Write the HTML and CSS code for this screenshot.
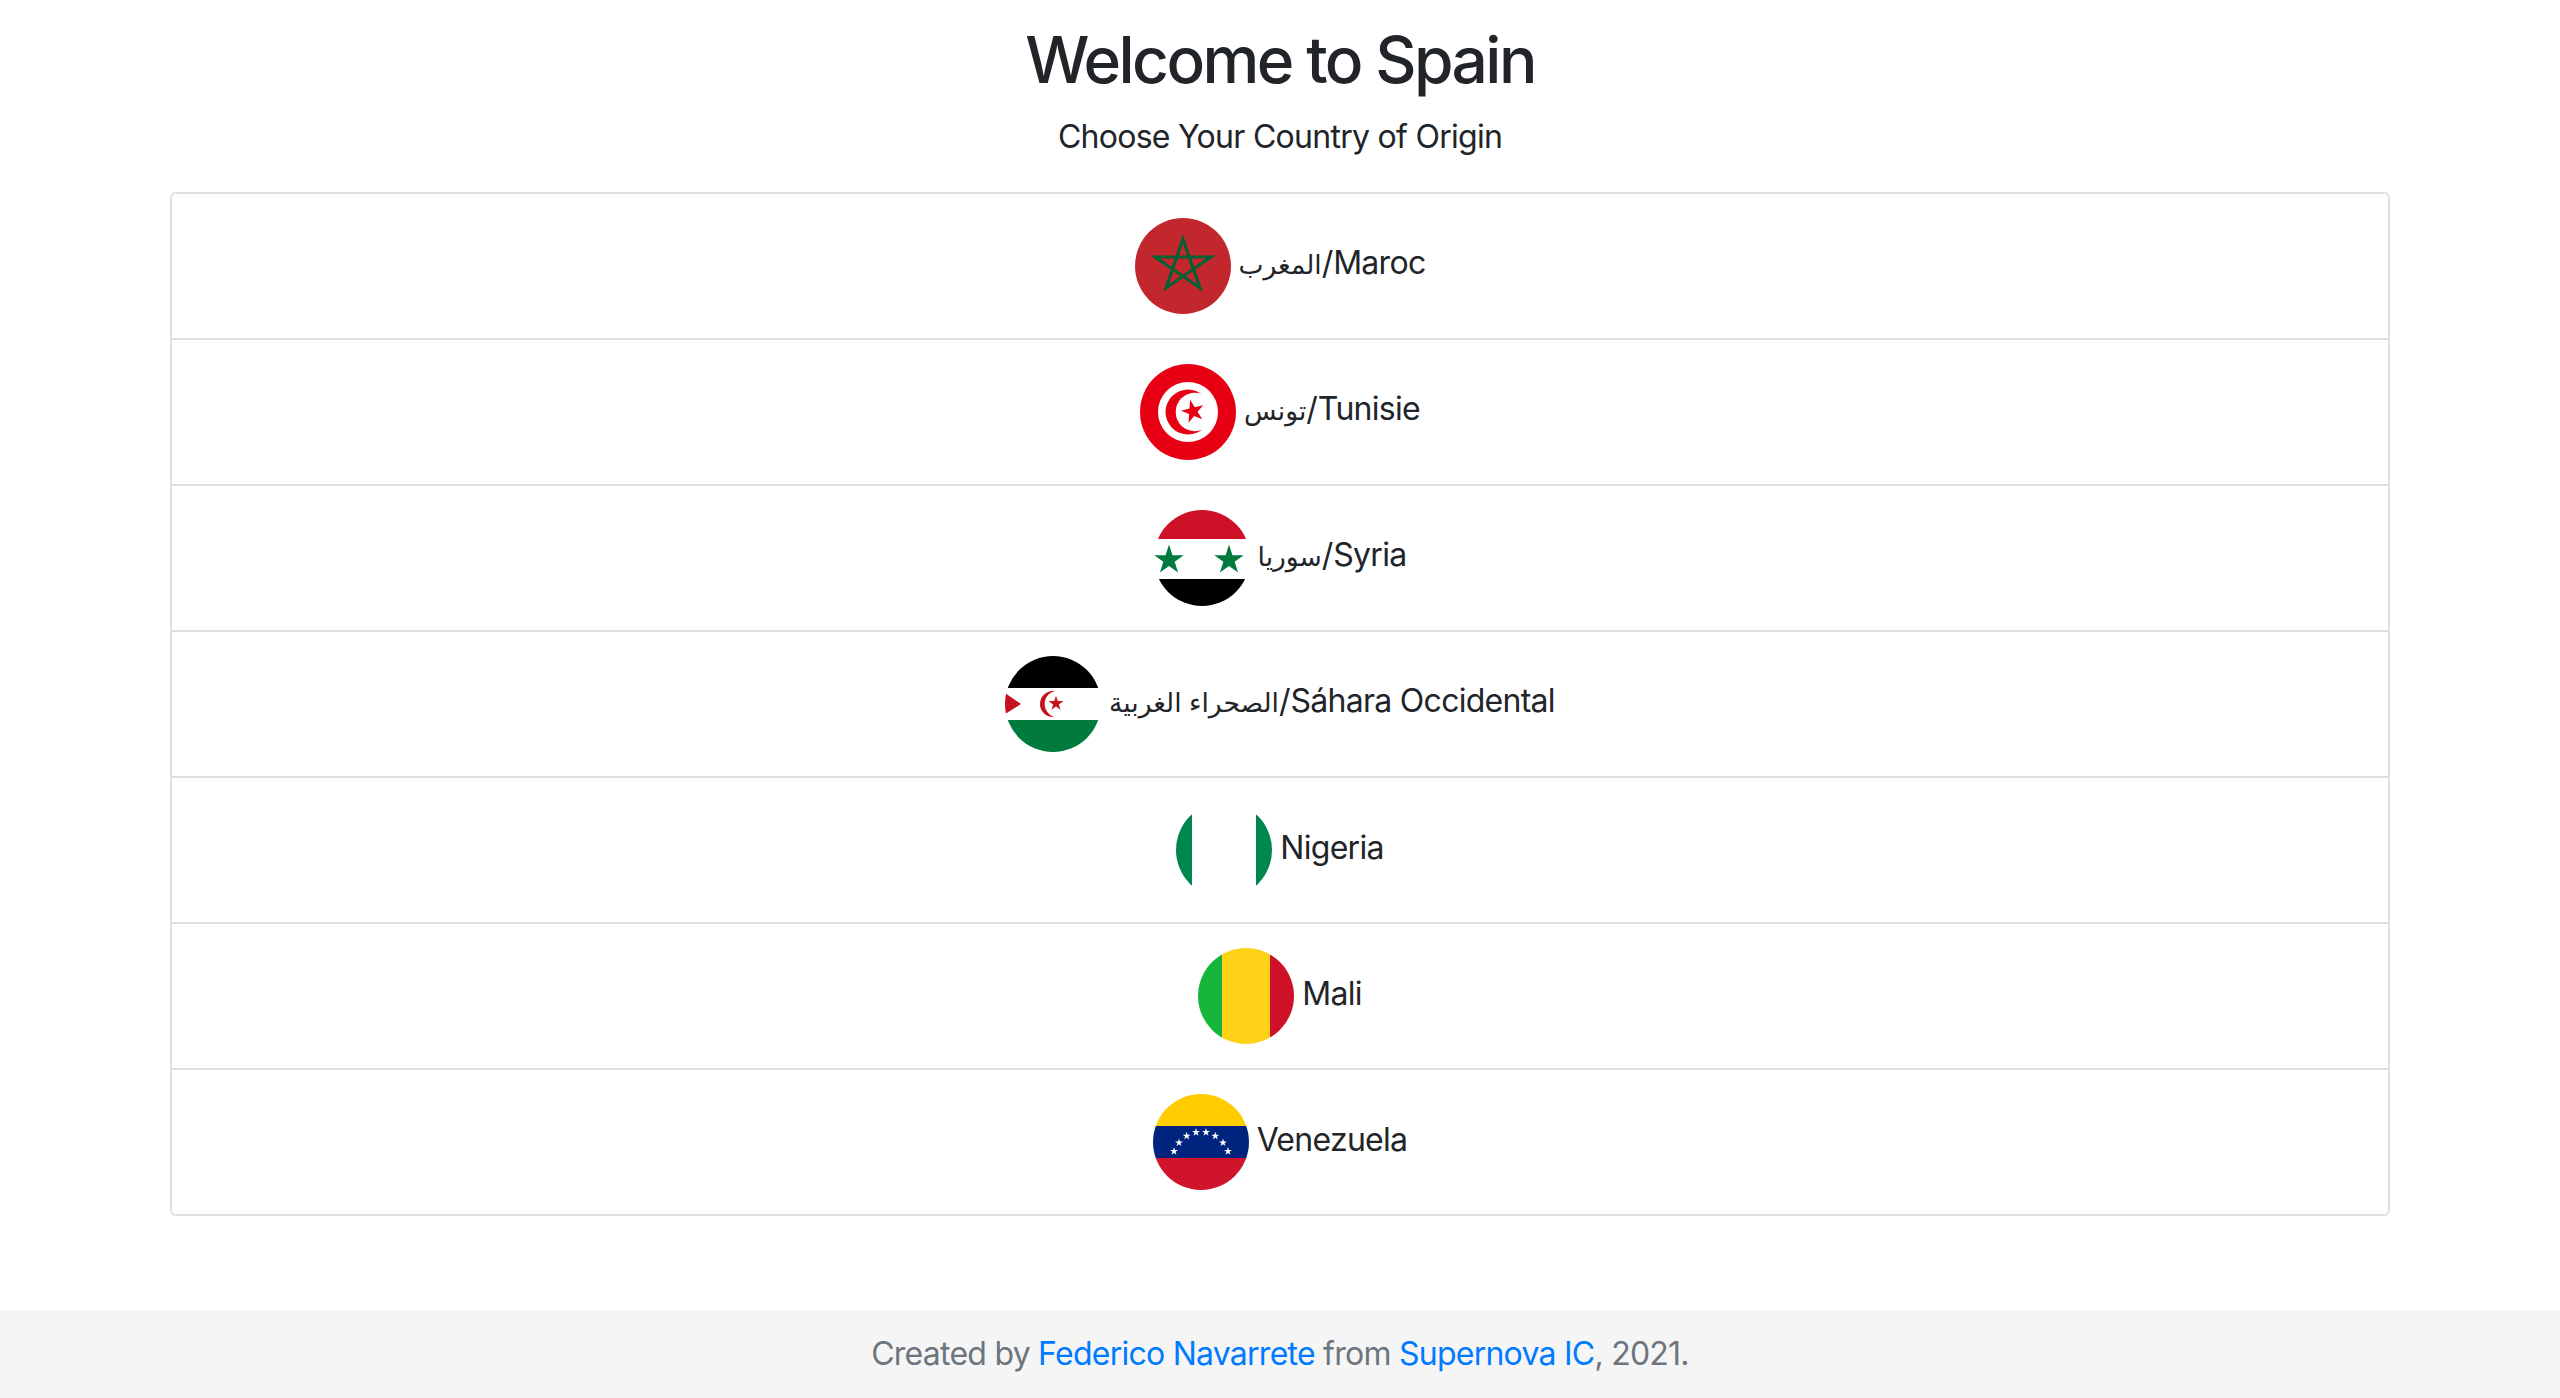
FILE: index.html
```html
<!DOCTYPE html>
<html lang="en">
<head>
<meta charset="utf-8">
<title>Welcome to Spain</title>
<link rel="stylesheet" href="styles.css">
</head>
<body>
<svg class="defs" aria-hidden="true"><defs><path id="star" d="M0-10 2.245-3.09H9.511L3.633 1.18 5.878 8.09 0 3.82-5.878 8.09-3.633 1.18-9.511-3.09H-2.245Z"/></defs></svg>
<main class="content">
  <h1 class="title">Welcome to Spain</h1>
  <p class="subtitle">Choose Your Country of Origin</p>
  <ul class="countries">
    <li class="country">
      <svg class="flag" viewBox="0 0 96 96"><rect width="96" height="96" fill="#c1272d"/><path d="M48 21 65 70 20 39H76L31 70Z" fill="none" stroke="#006233" stroke-width="3"/></svg>
      <span class="name"><span class="ar" lang="ar">المغرب</span>/Maroc</span>
    </li>
    <li class="country">
      <svg class="flag" viewBox="0 0 96 96"><rect width="96" height="96" fill="#e70013"/><circle cx="48" cy="48" r="30" fill="#fff"/><circle cx="48" cy="48" r="22.5" fill="#e70013"/><circle cx="55" cy="48" r="19.3" fill="#fff"/><use href="#star" transform="translate(53 47.5) rotate(-14) scale(1.2)" fill="#e70013"/></svg>
      <span class="name"><span class="ar" lang="ar">تونس</span>/Tunisie</span>
    </li>
    <li class="country">
      <svg class="flag" viewBox="0 0 96 96"><rect width="96" height="96" fill="#fff"/><rect width="96" height="29" fill="#ce1126"/><rect y="69" width="96" height="27" fill="#000"/><use href="#star" transform="translate(15 50) scale(1.55)" fill="#007a3d"/><use href="#star" transform="translate(75 50) scale(1.55)" fill="#007a3d"/></svg>
      <span class="name"><span class="ar" lang="ar">سوريا</span>/Syria</span>
    </li>
    <li class="country">
      <svg class="flag" viewBox="0 0 96 96"><rect width="96" height="96" fill="#fff"/><rect width="96" height="32" fill="#000"/><rect y="64" width="96" height="32" fill="#007a3d"/><path d="M0 37 16 48 0 58Z" fill="#c4111b"/><circle cx="48" cy="48" r="13" fill="#c4111b"/><circle cx="53" cy="48" r="13.3" fill="#fff"/><use href="#star" transform="translate(51 47.5) scale(.78)" fill="#c4111b"/></svg>
      <span class="name"><span class="ar" lang="ar">الصحراء الغربية</span>/Sáhara Occidental</span>
    </li>
    <li class="country">
      <svg class="flag" viewBox="0 0 96 96"><rect width="96" height="96" fill="#fff"/><rect width="16" height="96" fill="#008751"/><rect x="80" width="16" height="96" fill="#008751"/></svg>
      <span class="name">Nigeria</span>
    </li>
    <li class="country">
      <svg class="flag" viewBox="0 0 96 96"><rect width="24" height="96" fill="#14b53a"/><rect x="24" width="48" height="96" fill="#fcd116"/><rect x="72" width="24" height="96" fill="#ce1126"/></svg>
      <span class="name">Mali</span>
    </li>
    <li class="country">
      <svg class="flag" viewBox="0 0 96 96"><rect width="96" height="32" fill="#fc0"/><rect y="32" width="96" height="32" fill="#00247d"/><rect y="64" width="96" height="32" fill="#cf142b"/><g fill="#fff"><use href="#star" transform="translate(21 57.3) scale(.42)"/><use href="#star" transform="translate(26 48.7) scale(.42)"/><use href="#star" transform="translate(33.7 42) scale(.42)"/><use href="#star" transform="translate(43 38.3) scale(.42)"/><use href="#star" transform="translate(53 38.3) scale(.42)"/><use href="#star" transform="translate(62.3 42) scale(.42)"/><use href="#star" transform="translate(70 48.7) scale(.42)"/><use href="#star" transform="translate(75 57.3) scale(.42)"/></g></svg>
      <span class="name">Venezuela</span>
    </li>
  </ul>
</main>
<footer class="footer">
  <p class="credit">Created by <a href="#">Federico Navarrete</a> from <a href="#">Supernova IC</a>, 2021.</p>
</footer>
</body>
</html>
```
FILE: styles.css
```css
* { box-sizing: border-box; }
html, body { height: 100%; }
body {
  margin: 0;
  min-height: 100vh;
  display: flex;
  flex-direction: column;
  background: #fff;
  color: #212529;
  font-family: Inter, "DejaVu Sans", sans-serif;
  text-align: center;
}
.defs { display: none; }
.content { flex: 1; padding: 24px 170px 0; }
.title { margin: 0; font-size: 64px; line-height: 72px; font-weight: 550; letter-spacing: -2.6px; }
.subtitle { margin: 16px 0 0; font-size: 32px; line-height: 50px; font-weight: 400; letter-spacing: -0.72px; }
.countries { list-style: none; margin: 30px 0 0; padding: 0; border: 2px solid #dfdfdf; border-radius: 6px; }
.country { display: flex; align-items: center; justify-content: center; gap: 8px; height: 146px; border-bottom: 2px solid #dfdfdf; }
.country:last-child { border-bottom: 0; height: 144px; }
.flag { width: 96px; height: 96px; border-radius: 50%; flex: none; }
.name { font-size: 32px; line-height: 48px; margin-top: -5px; letter-spacing: -0.72px; }
.ar { font-size: 26.5px; letter-spacing: 0; }
.footer { height: 88px; background: #f5f5f5; display: flex; align-items: center; justify-content: center; }
.credit { margin: 0; font-size: 32px; line-height: 48px; color: #6c757d; letter-spacing: -0.75px; }
.credit a { color: #007bff; text-decoration: none; }
```
